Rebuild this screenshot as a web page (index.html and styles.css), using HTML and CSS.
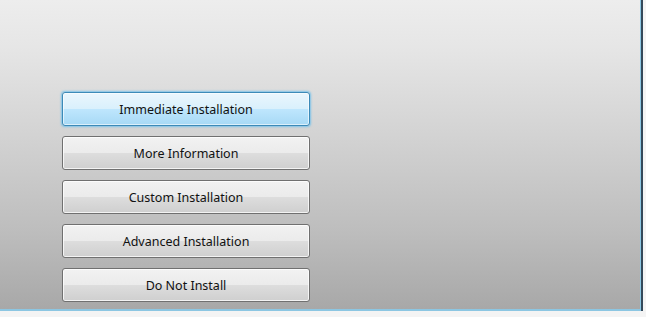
FILE: index.html
```html
<!DOCTYPE html>
<html>
<head>
<meta charset="utf-8">
<link rel="stylesheet" href="styles.css">
</head>
<body>
<div class="window">
  <div class="actions">
    <button class="btn btn-focus">Immediate Installation</button>
    <button class="btn">More Information</button>
    <button class="btn">Custom Installation</button>
    <button class="btn">Advanced Installation</button>
    <button class="btn">Do Not Install</button>
  </div>
</div>
</body>
</html>
```
FILE: styles.css
```css
html, body {
  margin: 0;
  padding: 0;
  background: #f4f4f4;
}
.window {
  width: 640px;
  height: 309px;
  background: linear-gradient(to bottom, #ededed 0%, #e6e6e6 15%, #d2d2d2 45%, #bdbdbd 75%, #a8a8a8 100%);
  border-right: 1px solid #8cc6e2;
  border-bottom: 2px solid #8cc6e2;
  box-shadow: 2px 0 0 #34495a, 0 1px 0 #c8d8e0;
  box-sizing: content-box;
}
.actions {
  display: flex;
  flex-direction: column;
  gap: 10px;
  padding: 92px 0 0 62px;
}
.btn {
  width: 248px;
  height: 34px;
  margin: 0;
  padding: 0;
  border: 1px solid #707070;
  border-radius: 3px;
  background: linear-gradient(to bottom, #f2f2f2 0%, #ebebeb 50%, #dddddd 51%, #cfcfcf 100%);
  box-shadow: inset 0 0 0 1px rgba(255,255,255,0.75);
  font-family: "Noto Sans", "DejaVu Sans", sans-serif;
  font-size: 12.5px;
  color: #111;
  text-align: center;
  cursor: default;
}
.btn-focus {
  border-color: #3c8ab8;
  background: linear-gradient(to bottom, #eaf6fd 0%, #d9f0fc 50%, #bee6fd 51%, #a7d9f5 100%);
  box-shadow: inset 0 0 0 1px rgba(255,255,255,0.6), 0 0 2px 1px #7ec3e8;
}
```
